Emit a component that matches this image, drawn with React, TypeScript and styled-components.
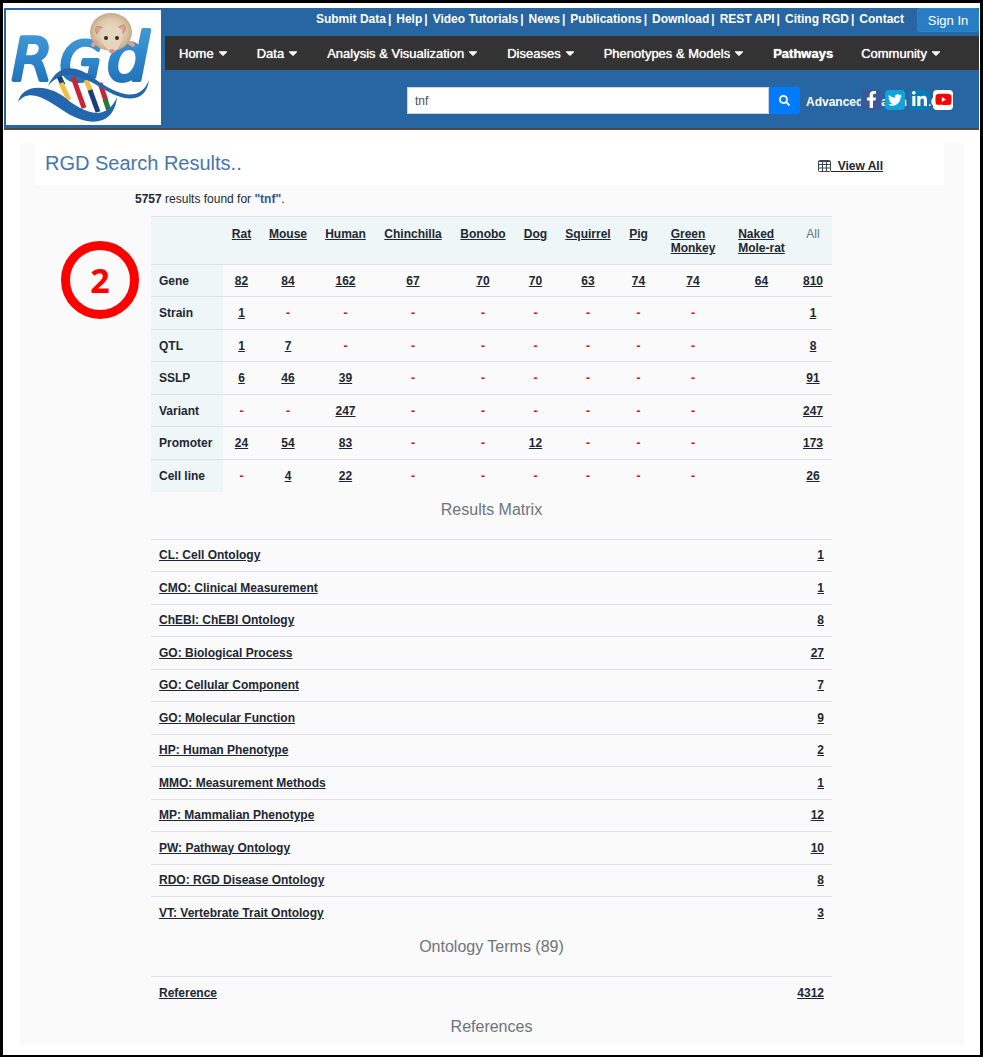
import React from "react";
import styled, { createGlobalStyle } from "styled-components";
import { FaCaretDown, FaFacebookF, FaLinkedinIn, FaSearch, FaTwitter, FaYoutube } from "react-icons/fa";

const GlobalStyle = createGlobalStyle`
  * { box-sizing: border-box; }
  body {
    margin: 0;
    background: #fff;
    color: #1d2733;
    font-family: "Liberation Sans", Arial, sans-serif;
    font-size: 12px;
  }
  ul { list-style: none; margin: 0; padding: 0; }
  a { color: inherit; }
`;

const Page = styled.div`
  position: relative;
  min-height: 100vh;
  padding: 5px 1px 10px;
  border: 3px solid #000;
`;

const Header = styled.header`
  display: flex;
  gap: 4px;
  background: #2865a3;
  border-bottom: 2px solid #4d4b40;
`;

const LogoLink = styled.a`
  flex: none;
  width: 155px;
  height: 115px;
  margin: 2px 0 3px 2px;
  background: #fff;
  svg { display: block; }
`;

const HeaderBody = styled.div`
  flex: 1;
  min-width: 0;
`;

const TopBar = styled.div`
  display: flex;
  justify-content: flex-end;
  align-items: flex-start;
  gap: 13px;
  height: 28px;
`;

const TopLinks = styled.ul`
  display: flex;
  color: #fff;
  font-weight: bold;
  line-height: 22px;
  white-space: nowrap;
  li + li::before { content: "|"; margin: 0 5px 0 2px; }
  a { text-decoration: none; }
`;

const SignIn = styled.button`
  width: 62px;
  height: 24px;
  padding: 0;
  border: 1px solid #1a8fc4;
  border-radius: 3px;
  background: #2a7dc5;
  color: #fff;
  font: 13px "Liberation Sans", Arial, sans-serif;
`;

const NavBar = styled.nav`
  background: #333;
  ul { display: flex; }
`;

const NavLink = styled.a<{ $strong?: boolean }>`
  display: flex;
  align-items: center;
  gap: 3px;
  height: 34px;
  padding: 0 14px;
  color: #fff;
  font-size: 13px;
  font-weight: ${(p) => (p.$strong ? "bold" : "normal")};
  text-decoration: none;
  text-shadow: 0 0 1px #fff;
  white-space: nowrap;
  svg { margin: 0 -1px; }
`;

const SearchRow = styled.form`
  display: flex;
  justify-content: flex-end;
  align-items: center;
  padding-top: 17px;
`;

const SearchInput = styled.input`
  flex: 0 1 362px;
  min-width: 0;
  height: 27px;
  padding: 0 7px;
  border: 1px solid #ced4da;
  background: #fff;
  color: #495057;
  font: 12px "Liberation Sans", Arial, sans-serif;
`;

const SearchButton = styled.button`
  display: grid;
  place-items: center;
  width: 31px;
  height: 27px;
  padding: 0;
  border: 0;
  border-radius: 0 3px 3px 0;
  background: #007bff;
  color: #fff;
`;

const Advanced = styled.div`
  position: relative;
  width: 173px;
  margin-left: 6px;
  padding-top: 2px;
  a { color: #fff; font-weight: bold; text-decoration: none; white-space: nowrap; }
`;

const Social = styled.ul`
  position: absolute;
  top: -3px;
  left: 55px;
  display: flex;
  gap: 4px;
`;

const SocialLink = styled.a<{ $bg: string; $fg?: string }>`
  display: grid;
  place-items: center;
  width: 20px;
  height: 20px;
  border-radius: 4px;
  background: ${(p) => p.$bg};
  && { color: ${(p) => p.$fg ?? "#fff"}; }
`;

const Panel = styled.main`
  margin: 12px 15px 0 16px;
  padding-bottom: 8px;
  background: #fafafa;
`;

const TitleBar = styled.div`
  display: flex;
  justify-content: space-between;
  align-items: center;
  height: 43px;
  margin: 0 20px 0 15px;
  padding: 0 61px 0 10px;
  background: #fff;
`;

const Title = styled.h1`
  margin: 0;
  color: #4576b0;
  font-size: 20px;
  font-weight: normal;
`;

const ViewAll = styled.a`
  display: flex;
  align-items: center;
  margin-top: 4px;
  font-weight: bold;
  text-decoration: none;
  span { text-decoration: underline; white-space: pre; }
`;

const Summary = styled.p`
  margin: 6px 0 9px 115px;
  line-height: 16px;
  b + b { color: #2f5597; }
`;

const Results = styled.div`
  padding: 0 132px 0 131px;
`;

const Table = styled.table`
  width: 100%;
  margin-bottom: 19px;
  border-collapse: collapse;
  table-layout: fixed;
  &:last-child { margin-bottom: 0; }
  caption {
    caption-side: bottom;
    padding-top: 8px;
    color: #6c757d;
    font-size: 16px;
    line-height: 20px;
  }
  tr { height: 32px; border-top: 1px solid #dee2e6; }
  tbody tr:nth-child(even) { height: 33px; }
  th, td { padding: 0; font-size: 12px; line-height: 14px; }
`;

const MatrixTable = styled(Table)`
  th, td { text-align: center; }
  thead tr { height: 48px; background: #eff6f7; }
  thead th { padding: 10px 6px 0; vertical-align: top; white-space: nowrap; }
  tbody th { padding-left: 8px; background: #eff6f7; text-align: left; }
`;

const HeadLink = styled.a`
  display: inline-block;
  text-align: left;
  white-space: pre-line;
`;

const AllHead = styled.span`
  color: #6c757d;
  font-weight: normal;
`;

const Count = styled.a`
  font-weight: bold;
`;

const None = styled.span`
  color: #f00;
  font-weight: bold;
`;

const ListTable = styled(Table)`
  th { padding-left: 8px; text-align: left; }
  td { width: 96px; padding-right: 8px; text-align: right; }
`;

const Step = styled.div`
  position: absolute;
  top: 238px;
  left: 58px;
  display: grid;
  place-items: center;
  width: 78px;
  height: 78px;
  border: 9px solid #f00;
  border-radius: 50%;
  color: #f00;
  font: bold 34px "Open Sans", sans-serif;
  line-height: 60px;
`;

const topLinks = ["Submit Data", "Help", "Video Tutorials", "News", "Publications", "Download", "REST API", "Citing RGD", "Contact"];

const navItems = ["Home", "Data", "Analysis & Visualization", "Diseases", "Phenotypes & Models", "Pathways", "Community"];

const species: [string, number][] = [
  ["Rat", 37], ["Mouse", 56], ["Human", 59], ["Chinchilla", 76], ["Bonobo", 64], ["Dog", 41],
  ["Squirrel", 64], ["Pig", 37], ["Green\nMonkey", 72], ["Naked\nMole-rat", 65],
];

const matrix: [string, string[]][] = [
  ["Gene", ["82", "84", "162", "67", "70", "70", "63", "74", "74", "64", "810"]],
  ["Strain", ["1", "-", "-", "-", "-", "-", "-", "-", "-", "", "1"]],
  ["QTL", ["1", "7", "-", "-", "-", "-", "-", "-", "-", "", "8"]],
  ["SSLP", ["6", "46", "39", "-", "-", "-", "-", "-", "-", "", "91"]],
  ["Variant", ["-", "-", "247", "-", "-", "-", "-", "-", "-", "", "247"]],
  ["Promoter", ["24", "54", "83", "-", "-", "12", "-", "-", "-", "", "173"]],
  ["Cell line", ["-", "4", "22", "-", "-", "-", "-", "-", "-", "", "26"]],
];

const ontologies: [string, string][] = [
  ["CL: Cell Ontology", "1"],
  ["CMO: Clinical Measurement", "1"],
  ["ChEBI: ChEBI Ontology", "8"],
  ["GO: Biological Process", "27"],
  ["GO: Cellular Component", "7"],
  ["GO: Molecular Function", "9"],
  ["HP: Human Phenotype", "2"],
  ["MMO: Measurement Methods", "1"],
  ["MP: Mammalian Phenotype", "12"],
  ["PW: Pathway Ontology", "10"],
  ["RDO: RGD Disease Ontology", "8"],
  ["VT: Vertebrate Trait Ontology", "3"],
];

function Logo() {
  return (
    <svg width="155" height="115" viewBox="0 0 155 115" role="img" aria-label="Rat Genome Database">
      <defs>
        <linearGradient id="tube" x1="0" y1="0" x2="0" y2="1">
          <stop offset="0" stopColor="#4a9ed8" />
          <stop offset="0.5" stopColor="#2d86cb" />
          <stop offset="1" stopColor="#1f68af" />
        </linearGradient>
        <radialGradient id="fur">
          <stop offset="0" stopColor="#efe0c9" />
          <stop offset="0.7" stopColor="#dcc8aa" />
          <stop offset="1" stopColor="#c4aa88" />
        </radialGradient>
      </defs>
      <g fill="url(#tube)" stroke="url(#tube)" strokeWidth="4" strokeLinejoin="round" fontFamily="DejaVu Sans, sans-serif" fontStyle="italic">
        <text x="6" y="70" fontSize="58">R</text>
        <text x="54" y="70" fontSize="54">G</text>
        <text x="101" y="70" fontSize="66">d</text>
      </g>
      <g strokeWidth="5" fill="none">
        <path d="M52 64 L57 75" stroke="#173f7e" />
        <path d="M55 73 L63 90" stroke="#f4bf45" />
        <path d="M67 67 L78 98" stroke="#cb2434" />
        <path d="M80 70 L85 82" stroke="#f4bf45" />
        <path d="M84 80 L92 102" stroke="#173f7e" />
        <path d="M94 73 L100 91" stroke="#cb2434" />
        <path d="M99 89 L103 101" stroke="#237a3c" />
      </g>
      <path d="M12 92 C16 74 40 74 57 86 C77 103 100 113 111 87 C108 117 82 116 61 103 C41 90 24 77 12 92Z" fill="#2466ad" />
      <path d="M42 76 C52 53 69 55 86 67 C112 86 134 93 143 70 C140 94 118 91 101 81 C81 69 59 55 42 76Z" fill="#2466ad" />
      <ellipse cx="105" cy="22" rx="21" ry="19" fill="url(#fur)" />
      <path d="M91 24 C88 18 90 14 97 18 M112 18 C119 12 122 16 117 24" fill="#dfa08f" stroke="#c98979" strokeWidth="1" />
      <path d="M94 20 C99 15 111 15 116 20 C118 29 113 39 107 43 C99 39 93 30 94 20Z" fill="#e6d6bf" />
      <circle cx="100" cy="28" r="2" fill="#372b28" />
      <circle cx="111" cy="28" r="2" fill="#372b28" />
      <ellipse cx="106" cy="41" rx="3" ry="2" fill="#d88f85" />
      <path d="M87 35 l3 -3 M124 33 l3 2" stroke="#dfa08f" strokeWidth="4" strokeLinecap="round" />
    </svg>
  );
}

function GridIcon() {
  return (
    <svg width="13" height="12" viewBox="0 0 13 12" fill="none" stroke="#3c4650" aria-hidden="true">
      <rect x="0.5" y="0.5" width="12" height="11" rx="1" />
      <path d="M1 1.5h11M1 4.5h11M1 8h11M4.5 1v10M8.5 1v10" />
    </svg>
  );
}

function Cell({ value }: { value: string }) {
  if (!value) return null;
  return value === "-" ? <None>-</None> : <Count href="#">{value}</Count>;
}

function LinkList({ caption, rows }: { caption: string; rows: [string, string][] }) {
  return (
    <ListTable>
      <caption>{caption}</caption>
      <tbody>
        {rows.map(([name, count]) => (
          <tr key={name}>
            <th scope="row"><a href="#">{name}</a></th>
            <td><Count href="#">{count}</Count></td>
          </tr>
        ))}
      </tbody>
    </ListTable>
  );
}

export default function App() {
  return (
    <Page>
      <GlobalStyle />
      <Header>
        <LogoLink href="#"><Logo /></LogoLink>
        <HeaderBody>
          <TopBar>
            <TopLinks>
              {topLinks.map((t) => <li key={t}><a href="#">{t}</a></li>)}
            </TopLinks>
            <SignIn type="button">Sign In</SignIn>
          </TopBar>
          <NavBar>
            <ul>
              {navItems.map((t) => (
                <li key={t}>
                  <NavLink href="#" $strong={t === "Pathways"}>
                    {t}
                    {t !== "Pathways" && <FaCaretDown size={14} />}
                  </NavLink>
                </li>
              ))}
            </ul>
          </NavBar>
          <SearchRow onSubmit={(e) => e.preventDefault()}>
            <SearchInput aria-label="Search" defaultValue="tnf" />
            <SearchButton aria-label="Run search"><FaSearch size={11} /></SearchButton>
            <Advanced>
              <a href="#">Advanced Search (OLGA)</a>
              <Social>
                <li><SocialLink href="#" aria-label="Facebook" $bg="#3b5998"><FaFacebookF size={17} /></SocialLink></li>
                <li><SocialLink href="#" aria-label="Twitter" $bg="#0fa5dc"><FaTwitter size={14} /></SocialLink></li>
                <li><SocialLink href="#" aria-label="LinkedIn" $bg="#0b7bb5"><FaLinkedinIn size={17} /></SocialLink></li>
                <li><SocialLink href="#" aria-label="YouTube" $bg="#fff" $fg="#f00"><FaYoutube size={17} /></SocialLink></li>
              </Social>
            </Advanced>
          </SearchRow>
        </HeaderBody>
      </Header>
      <Panel>
        <TitleBar>
          <Title>RGD Search Results..</Title>
          <ViewAll href="#"><GridIcon /><span>{"  View All"}</span></ViewAll>
        </TitleBar>
        <Summary><b>5757</b> results found for <b>"tnf"</b>.</Summary>
        <Results>
          <MatrixTable>
            <caption>Results Matrix</caption>
            <colgroup>
              <col width={72} />
              {species.map(([name, width]) => <col key={name} width={width} />)}
              <col width={38} />
            </colgroup>
            <thead>
              <tr>
                <td />
                {species.map(([name]) => <th key={name} scope="col"><HeadLink href="#">{name}</HeadLink></th>)}
                <th scope="col"><AllHead>All</AllHead></th>
              </tr>
            </thead>
            <tbody>
              {matrix.map(([name, cells]) => (
                <tr key={name}>
                  <th scope="row">{name}</th>
                  {cells.map((value, i) => <td key={i}><Cell value={value} /></td>)}
                </tr>
              ))}
            </tbody>
          </MatrixTable>
          <LinkList caption="Ontology Terms (89)" rows={ontologies} />
          <LinkList caption="References" rows={[["Reference", "4312"]]} />
        </Results>
      </Panel>
      <Step>2</Step>
    </Page>
  );
}
